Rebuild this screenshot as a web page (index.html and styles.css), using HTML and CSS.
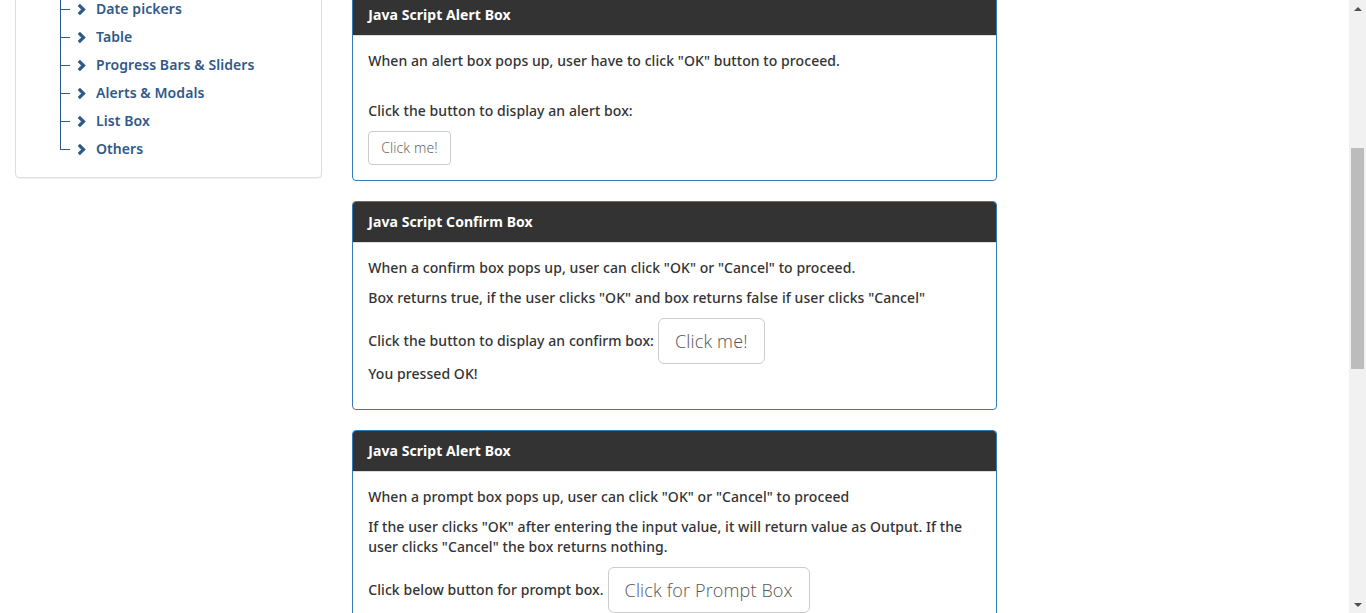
FILE: index.html
```html
<!DOCTYPE html>
<html>
<head>
<meta charset="utf-8">
<link rel="stylesheet" href="styles.css">
</head>
<body>
<div class="viewport">
  <div class="row">
    <div class="col-side">
      <div class="panel">
        <ul class="tree">
          <li><span class="branch"></span><svg class="chev" viewBox="0 0 9 13"><path d="M1.8 1.8 L6.5 6.5 L1.8 11.2"/></svg><a>Date pickers</a></li>
          <li><span class="branch"></span><svg class="chev" viewBox="0 0 9 13"><path d="M1.8 1.8 L6.5 6.5 L1.8 11.2"/></svg><a>Table</a></li>
          <li><span class="branch"></span><svg class="chev" viewBox="0 0 9 13"><path d="M1.8 1.8 L6.5 6.5 L1.8 11.2"/></svg><a>Progress Bars &amp; Sliders</a></li>
          <li><span class="branch"></span><svg class="chev" viewBox="0 0 9 13"><path d="M1.8 1.8 L6.5 6.5 L1.8 11.2"/></svg><a>Alerts &amp; Modals</a></li>
          <li><span class="branch"></span><svg class="chev" viewBox="0 0 9 13"><path d="M1.8 1.8 L6.5 6.5 L1.8 11.2"/></svg><a>List Box</a></li>
          <li class="last"><span class="branch"></span><svg class="chev" viewBox="0 0 9 13"><path d="M1.8 1.8 L6.5 6.5 L1.8 11.2"/></svg><a>Others</a></li>
        </ul>
      </div>
    </div>
    <div class="col-main">
      <div class="card">
        <div class="card-head">Java Script Alert Box</div>
        <div class="card-body">
          <p>When an alert box pops up, user have to click "OK" button to proceed.<br>&nbsp;</p>
          <p>Click the button to display an alert box:</p>
          <button class="btn">Click me!</button>
        </div>
      </div>
      <div class="card">
        <div class="card-head">Java Script Confirm Box</div>
        <div class="card-body">
          <p>When a confirm box pops up, user can click "OK" or "Cancel" to proceed.</p>
          <p>Box returns true, if the user clicks "OK" and box returns false if user clicks "Cancel"</p>
          <div class="line">Click the button to display an confirm box: <button class="btn btn-lg">Click me!</button></div>
          <p class="result">You pressed OK!</p>
        </div>
      </div>
      <div class="card">
        <div class="card-head">Java Script Alert Box</div>
        <div class="card-body">
          <p>When a prompt box pops up, user can click "OK" or "Cancel" to proceed</p>
          <p>If the user clicks "OK" after entering the input value, it will return value as Output. If the user clicks "Cancel" the box returns nothing.</p>
          <div class="line">Click below button for prompt box. <button class="btn btn-lg">Click for Prompt Box</button></div>
          <p class="result">&nbsp;</p>
        </div>
      </div>
    </div>
  </div>
</div>
<div class="scrollbar">
  <div class="arrow up"></div>
  <div class="track"><div class="thumb"></div></div>
  <div class="arrow down"></div>
</div>
</body>
</html>
```
FILE: styles.css
```css
* { box-sizing: border-box; }
html, body { margin: 0; height: 100%; }
body {
  display: flex;
  overflow: hidden;
  background: #fff;
  font-family: "Noto Sans", "Open Sans", sans-serif;
  font-size: 14px;
  line-height: 20px;
  color: #333;
  font-weight: 500;
  letter-spacing: 0.07px;
}
.viewport { flex: 1; overflow: hidden; }
.row {
  display: grid;
  grid-template-columns: 25% 50%;
  margin-top: -6px;
}
.col-side, .col-main { padding: 0 15px; }
.panel {
  margin-top: -10px;
  border: 1px solid #ddd;
  border-radius: 4px;
  padding: 10px 0 14px 0;
  box-shadow: 0 1px 1px rgba(0,0,0,0.05);
}
.tree { list-style: none; margin: 0; padding: 0 0 0 44px; color: #30598a; font-weight: 600; }
.tree li { display: flex; align-items: center; height: 28px; position: relative; }
.branch {
  align-self: stretch;
  width: 10px;
  border-left: 1px solid #30598a;
  position: relative;
}
.branch::after {
  content: "";
  position: absolute;
  left: 0; top: 14px;
  width: 9px; height: 1px;
  background: #30598a;
}
.tree .last .branch { align-self: flex-start; height: 15px; }
.chev { width: 9px; height: 13px; margin-left: 7px; margin-right: 10px; fill: none; stroke: #30598a; stroke-width: 3.2; }
.tree a { color: #30598a; }

.card {
  border: 1px solid #337ab7;
  border-radius: 4px;
  margin-bottom: 20px;
  overflow: hidden;
}
.card-head {
  background: #333;
  color: #fff;
  font-weight: 700;
  padding: 10px 15px;
  border-bottom: 1px solid #ddd;
}
.card-body { padding: 15px; }
.card-body p { margin: 0 0 10px; }
.card-body .line { display: flex; align-items: center; gap: 4px; }
.card-body .result { margin: 0 0 10px; }
.btn {
  font-family: "Open Sans", sans-serif;
  font-weight: 300;
  font-size: 14px;
  line-height: 20px;
  padding: 6px 12px;
  border: 1px solid #ccc;
  border-radius: 4px;
  background: #fff;
  color: #555;
  letter-spacing: 0.1px;
}
.btn-lg { font-size: 18px; line-height: 24px; padding: 10px 16px; border-radius: 6px; letter-spacing: 0.15px; }

.scrollbar {
  width: 17px;
  background: #f1f1f1;
  display: flex;
  flex-direction: column;
}
.arrow { height: 17px; display: flex; justify-content: center; align-items: center; }
.arrow.up::before { content: ""; border: 4px solid transparent; border-bottom: 4px solid #505050; border-top-width: 0; }
.arrow.down::before { content: ""; border: 4px solid transparent; border-top: 4px solid #505050; border-bottom-width: 0; }
.track { flex: 1; padding-top: 131px; display: flex; justify-content: center; }
.thumb { width: 13px; height: 221px; background: #bcbcbc; }
```
